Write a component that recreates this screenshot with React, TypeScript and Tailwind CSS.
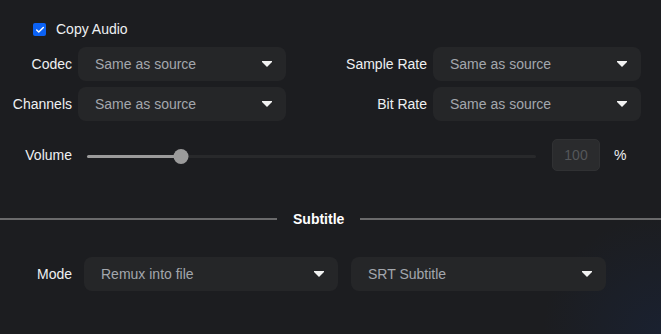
import { Check } from 'lucide-react';

function Caret() {
  return (
    <svg width="10" height="6" viewBox="0 0 10 6" className="shrink-0">
      <polygon points="0,0 10,0 10,1 5,6 0,1" fill="#f2f2f2" />
    </svg>
  );
}

function Select({ value, className }: { value: string; className: string }) {
  return (
    <div
      className={`h-[34px] rounded-[8px] bg-[#252628] flex items-center justify-between pl-[17px] pr-[14px] text-[14px] text-[#a3a7ad] ${className}`}
    >
      <span>{value}</span>
      <Caret />
    </div>
  );
}

export default function App() {
  const volume = 21;

  return (
    <div
      className="w-full h-[334px] overflow-hidden text-[14px] text-[#eef0f2] bg-[#1c1d1f] bg-[radial-gradient(circle_at_100%_100%,#1a2130_0%,#1c1d20_16%)]"
      style={{ fontFamily: '"Liberation Sans", Arial, sans-serif' }}
    >
      <div className="pt-[20px]">
        <div className="h-[19px] flex items-center pl-[33px] gap-[10px]">
          <div className="w-[13px] h-[13px] rounded-[2px] bg-[#0b62f5] flex items-center justify-center">
            <Check className="w-[10px] h-[10px] text-white" strokeWidth={3.5} />
          </div>
          <span>Copy Audio</span>
        </div>

        <div className="mt-[8px] flex flex-col gap-[6px]">
          <div className="flex items-center">
            <span className="w-[72px] text-right">Codec</span>
            <Select value="Same as source" className="ml-[6px] w-[208px]" />
            <span className="w-[141px] text-right">Sample Rate</span>
            <Select value="Same as source" className="ml-[6px] w-[208px]" />
          </div>
          <div className="flex items-center">
            <span className="w-[72px] text-right">Channels</span>
            <Select value="Same as source" className="ml-[6px] w-[208px]" />
            <span className="w-[141px] text-right">Bit Rate</span>
            <Select value="Same as source" className="ml-[6px] w-[208px]" />
          </div>
        </div>

        <div className="mt-[18px] h-[32px] flex items-center">
          <span className="w-[72px] text-right">Volume</span>
          <div className="ml-[15px] w-[449px] h-[15px] mt-[2px] relative flex items-center">
            <div className="w-full h-[3px] bg-[#28292b] rounded-full" />
            <div
              className="absolute left-0 h-[3px] bg-[#9b9b9b] rounded-full"
              style={{ width: `${volume}%` }}
            />
            <div
              className="absolute w-[15px] h-[15px] rounded-full bg-[#9b9b9b] -translate-x-1/2"
              style={{ left: `${volume}%` }}
            />
          </div>
          <div className="ml-[16px] w-[48px] h-[32px] rounded-[5px] bg-[#2a2b2d] border border-[#303133] flex items-center justify-center text-[#55575a]">
            100
          </div>
          <span className="ml-[14px]">%</span>
        </div>

        <div className="mt-[38px] h-[20px] flex items-center">
          <div className="w-[277px] h-[2px] bg-[#6a6a6b]" />
          <span className="ml-[16px] font-bold text-white">Subtitle</span>
          <div className="ml-[16px] flex-1 h-[2px] bg-[#6a6a6b]" />
        </div>

        <div className="mt-[28px] flex items-center">
          <span className="w-[72px] text-right">Mode</span>
          <Select value="Remux into file" className="ml-[12px] w-[254px] pl-[16px] pr-[12px]" />
          <Select value="SRT Subtitle" className="ml-[13px] w-[255px] pl-[16px] pr-[13px]" />
        </div>
      </div>
    </div>
  );
}
